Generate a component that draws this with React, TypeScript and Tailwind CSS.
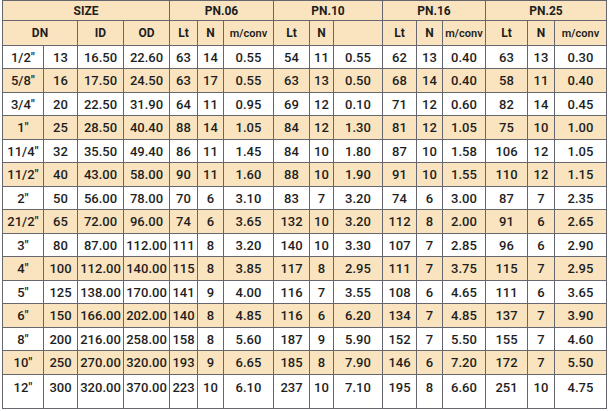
const widths = [41, 34, 46, 46, 28, 26, 50, 36, 24, 49, 34, 26, 43, 42, 27, 52]

// DN, DN mm, ID, OD, then Lt / N / m/conv for PN.06, PN.10, PN.16, PN.25
const rows: string[][] = [
  ['1/2"', '13', '16.50', '22.60', '63', '14', '0.55', '54', '11', '0.55', '62', '13', '0.40', '63', '13', '0.30'],
  ['5/8"', '16', '17.50', '24.50', '63', '17', '0.55', '63', '13', '0.50', '68', '14', '0.40', '58', '11', '0.40'],
  ['3/4"', '20', '22.50', '31.90', '64', '11', '0.95', '69', '12', '0.10', '71', '12', '0.60', '82', '14', '0.45'],
  ['1"', '25', '28.50', '40.40', '88', '14', '1.05', '84', '12', '1.30', '81', '12', '1.05', '75', '10', '1.00'],
  ['11/4"', '32', '35.50', '49.40', '86', '11', '1.45', '84', '10', '1.80', '87', '10', '1.58', '106', '12', '1.05'],
  ['11/2"', '40', '43.00', '58.00', '90', '11', '1.60', '88', '10', '1.90', '91', '10', '1.55', '110', '12', '1.15'],
  ['2"', '50', '56.00', '78.00', '70', '6', '3.10', '83', '7', '3.20', '74', '6', '3.00', '87', '7', '2.35'],
  ['21/2"', '65', '72.00', '96.00', '74', '6', '3.65', '132', '10', '3.20', '112', '8', '2.00', '91', '6', '2.65'],
  ['3"', '80', '87.00', '112.00', '111', '8', '3.20', '140', '10', '3.30', '107', '7', '2.85', '96', '6', '2.90'],
  ['4"', '100', '112.00', '140.00', '115', '8', '3.85', '117', '8', '2.95', '111', '7', '3.75', '115', '7', '2.95'],
  ['5"', '125', '138.00', '170.00', '141', '9', '4.00', '116', '7', '3.55', '108', '6', '4.65', '111', '6', '3.65'],
  ['6"', '150', '166.00', '202.00', '140', '8', '4.85', '116', '6', '6.20', '134', '7', '4.85', '137', '7', '3.90'],
  ['8"', '200', '216.00', '258.00', '158', '8', '5.60', '187', '9', '5.90', '152', '7', '5.50', '155', '7', '4.60'],
  ['10"', '250', '270.00', '320.00', '193', '9', '6.65', '185', '8', '7.90', '146', '6', '7.20', '172', '7', '5.50'],
  ['12"', '300', '320.00', '370.00', '223', '10', '6.10', '237', '10', '7.10', '195', '8', '6.60', '251', '10', '4.75'],
]

const cell = 'border border-[#66666f] text-center p-0'

function PnHeads() {
  return (
    <>
      <th className={cell}>Lt</th>
      <th className={cell}>N</th>
      <th className={`${cell} text-[11px] font-semibold`}>m/conv</th>
    </>
  )
}

export default function App() {
  return (
    <div className="w-[610px] h-[411px] bg-white pl-[2px] text-[#1e1e1e] text-[13px] font-medium leading-none [font-family:Roboto,'Liberation_Sans',sans-serif]">
      <table className="table-fixed border-collapse w-[605px]">
        <colgroup>
          {widths.map((w, i) => (
            <col key={i} style={{ width: w }} />
          ))}
        </colgroup>
        <thead className="bg-[#fae4bf] font-bold text-[12px]">
          <tr className="h-[20px]">
            <th colSpan={4} className={cell}>SIZE</th>
            <th colSpan={3} className={cell}>PN.06</th>
            <th colSpan={3} className={cell}>PN.10</th>
            <th colSpan={3} className={cell}>PN.16</th>
            <th colSpan={3} className={cell}>PN.25</th>
          </tr>
          <tr className="h-[25px]">
            <th colSpan={2} className={cell}>DN</th>
            <th className={cell}>ID</th>
            <th className={cell}>OD</th>
            <PnHeads />
            <th className={cell}>Lt</th>
            <th className={cell}>N</th>
            <th className={cell}></th>
            <PnHeads />
            <PnHeads />
          </tr>
        </thead>
        <tbody>
          {rows.map((r, i) => {
            const last = i === rows.length - 1
            const tall = i % 2 === 0 ? 'h-[23px]' : 'h-[24px]'
            return (
              <tr key={i} className={`${i % 2 === 1 ? 'bg-[#fae4bf]' : 'bg-white'} ${last ? 'h-[34px] align-top' : tall}`}>
                {r.map((v, j) => (
                  <td key={j} className={`${cell} ${last ? 'pt-[6px]' : ''}`}>{v}</td>
                ))}
              </tr>
            )
          })}
        </tbody>
      </table>
    </div>
  )
}
